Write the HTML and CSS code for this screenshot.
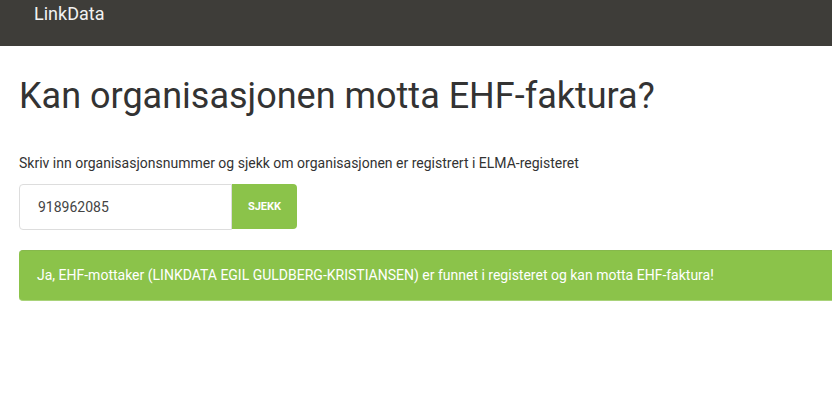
FILE: index.html
```html
<!DOCTYPE html>
<html lang="no">
<head>
    <meta charset="UTF-8">
    <meta name="viewport" content="width=device-width, initial-scale=1.0">
    <title>LinkData - EHF-sjekk</title>
    <link rel="stylesheet" href="styles.css">
</head>
<body>
    <nav class="navbar">
        <a class="brand" href="#">LinkData</a>
    </nav>
    <div class="container">
        <h1>Kan organisasjonen motta EHF-faktura?</h1>
        <p class="lead">Skriv inn organisasjonsnummer og sjekk om organisasjonen er registrert i ELMA-registeret</p>
        <form class="search" onsubmit="return false;">
            <input type="text" class="orgnr" value="918962085">
            <button type="submit" class="sjekk">SJEKK</button>
        </form>
        <div class="alert">Ja, EHF-mottaker (LINKDATA EGIL GULDBERG-KRISTIANSEN) er funnet i registeret og kan motta EHF-faktura!</div>
    </div>
</body>
</html>
```
FILE: styles.css
```css
html, body {
    overflow: hidden;
}
body {
    margin: 0;
    font-family: Roboto, "Liberation Sans", Arial, sans-serif;
    color: #333;
    background: #fff;
}
.navbar {
    background: #3e3d39;
    height: 46px;
    padding-left: 34px;
}
.brand {
    display: inline-block;
    color: #f2f2f2;
    font-size: 18px;
    line-height: 28px;
    text-decoration: none;
}
.container {
    padding-left: 19px;
    width: 1140px;
}
h1 {
    margin: 30px 0 0;
    font-size: 36px;
    font-weight: 400;
    line-height: 40px;
    color: #333;
}
.lead {
    margin: 37px 0 0;
    font-size: 14px;
    line-height: 20px;
    color: #333;
}
.search {
    display: flex;
    margin-top: 11px;
}
.orgnr {
    box-sizing: border-box;
    width: 213px;
    height: 46px;
    padding: 0 18px;
    font-family: inherit;
    font-size: 14px;
    color: #444;
    border: 1px solid #ddd;
    border-radius: 4px 0 0 4px;
    outline: none;
}
.sjekk {
    width: 65px;
    height: 45px;
    border: 0;
    border-radius: 0 4px 4px 0;
    background: #8bc34a;
    color: #fff;
    font-family: inherit;
    font-size: 11px;
    font-weight: 700;
    cursor: pointer;
}
.alert {
    margin-top: 20px;
    height: 51px;
    box-sizing: border-box;
    padding: 0 18px;
    line-height: 49px;
    background: #8bc34a;
    border-top: 1px solid #86b84c;
    border-bottom: 1px solid #a9d37a;
    border-radius: 4px;
    color: #fff;
    font-size: 14px;
}
```
